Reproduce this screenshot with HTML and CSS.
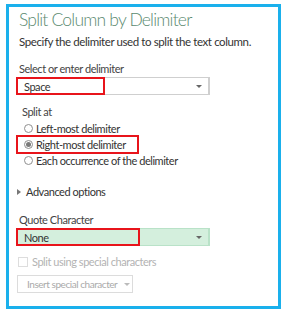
FILE: index.html
```html
<!DOCTYPE html>
<html lang="en">
<head>
  <meta charset="UTF-8">
  <title>Split Column by Delimiter</title>
  <link rel="stylesheet" href="styles.css">
</head>
<body>

  <div class="dialog">
    <h1>Split Column by Delimiter</h1>
    <p class="intro">Specify the delimiter used to split the text column.</p>

    <label class="label">Select or enter delimiter</label>
    <div class="select hl hl-value">
      <span>Space</span><i class="caret"></i>
    </div>

    <div class="group">
      <div class="group-title">Split at</div>
      <div class="radio"><span class="dot"></span>Left-most delimiter</div>
      <div class="radio checked hl hl-row"><span class="dot"></span>Right-most delimiter</div>
      <div class="radio"><span class="dot"></span>Each occurrence of the delimiter</div>
    </div>

    <div class="advanced"><i class="tri"></i>Advanced options</div>

    <label class="label">Quote Character</label>
    <div class="select green hl hl-quote">
      <span>None</span><i class="caret"></i>
    </div>

    <div class="check"><span class="box"></span>Split using special characters</div>
    <div class="insert">Insert special character <i class="caret light"></i></div>
  </div>

</body>
</html>
```

FILE: styles.css
```css
*{box-sizing:border-box;margin:0;padding:0}
body{
  background:#fff;
  font-family:Lato,"Open Sans",sans-serif;
  color:#333;
  white-space:nowrap;
  letter-spacing:-.45px;
}
/* dialog frame */
.dialog{
  margin:4px 6px;
  width:275px;
  height:305px;
  border:3px solid #1ab0ec;
  padding:0 7px;
  display:flex;
  flex-direction:column;
  align-items:flex-start;
}
h1{
  font-size:17.5px;
  font-weight:300;
  line-height:25px;
  color:#5b8a70;
  margin-left:3px;
  letter-spacing:-.8px;
}
.intro{
  font-size:11.5px;
  line-height:16px;
  margin:2px 0 0 3px;
  color:#333;
  letter-spacing:-.4px;
}
.label{
  font-size:11px;
  line-height:14px;
  margin:12px 0 1px 3px;
  color:#444;
}
/* dropdowns */
.select{
  width:194px;
  height:18px;
  border:1px solid #cfcfcf;
  border-right-width:2px;
  display:flex;
  align-items:center;
  justify-content:space-between;
  padding:0 6px 0 7px;
  font-size:11px;
  color:#333;
}
.select.green{
  background:#d4efdd;
  border-color:#b9e2c8;
}
.caret{
  width:0;height:0;
  border-left:3px solid transparent;
  border-right:3px solid transparent;
  border-top:3px solid #666;
}
.caret.light{border-top-color:#bbb;margin-left:7px}
/* red annotation boxes */
.hl{position:relative}
.hl::after{
  content:"";
  position:absolute;
  border:2px solid #e8141b;
  pointer-events:none;
}
.hl-value::after{left:-1px;top:-1px;bottom:-1px;width:85px}
.hl-quote::after{left:-1px;top:-1px;bottom:-1px;width:120px}
.hl-row::after{left:-6px;top:-1px;bottom:-2px;width:119px}
/* split at */
.group{
  margin:10px 0 0 6px;
  display:flex;
  flex-direction:column;
}
.group-title{
  font-size:11px;
  line-height:14px;
  color:#444;
  margin-bottom:1px;
}
.radio{
  display:flex;
  align-items:center;
  height:16px;
  font-size:11px;
  color:#333;
}
.dot{
  width:9px;height:9px;
  border:1px solid #8f8f8f;
  border-radius:50%;
  margin:0 3px 0 2px;
  display:flex;
  align-items:center;
  justify-content:center;
}
.checked .dot::before{
  content:"";
  width:5px;height:5px;
  border-radius:50%;
  background:#7a7a7a;
}
/* advanced */
.advanced{
  margin:17px 0 0 1px;
  display:flex;
  align-items:center;
  font-size:11px;
  color:#333;
}
.tri{
  width:0;height:0;
  border-top:3.5px solid transparent;
  border-bottom:3.5px solid transparent;
  border-left:4px solid #777;
  margin-right:5px;
}
.advanced + .label{margin-top:15px}
/* disabled bits */
.check{
  margin:9px 0 0 2px;
  display:flex;
  align-items:center;
  font-size:11px;
  color:#b3b3b3;
}
.box{
  width:10px;height:10px;
  border:1px solid #ddd;
  margin-right:4px;
}
.insert{
  margin:7px 0 0 1px;
  height:18px;
  width:116px;
  border:1px solid #dcdcdc;
  display:flex;
  align-items:center;
  padding-left:9px;
  font-size:10px;
  letter-spacing:-.45px;
  color:#aaa;
}
```
